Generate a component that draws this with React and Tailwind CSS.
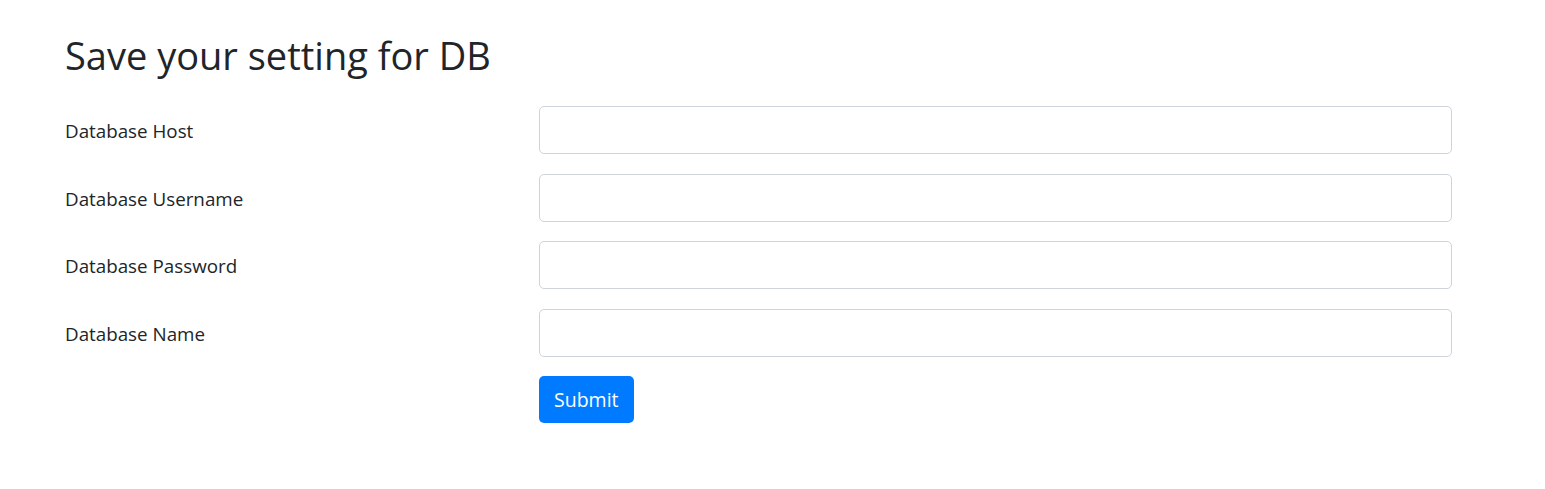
export default function App() {
    const fields = ["Database Host", "Database Username", "Database Password", "Database Name"];

    return (
        <div className="min-h-screen bg-white text-[#212529] font-['Open_Sans',sans-serif]">
            <div className="pl-[65px] pt-[31px]">
                <h1 className="text-[38px] leading-[48px] font-normal mb-[27px]">
                    Save your setting for DB
                </h1>

                <form className="flex flex-col gap-[19.5px]">
                    {fields.map((label) => (
                        <div key={label} className="flex items-center h-12">
                            <label className="w-[474px] text-[18.8px] leading-[46px] pt-[2px]">{label}</label>
                            <input
                                type="text"
                                className="w-[913px] h-12 border border-[#ced4da] rounded-[5px] px-4 text-[20px] outline-none"
                            />
                        </div>
                    ))}

                    <div className="flex">
                        <div className="w-[474px]" />
                        <button
                            type="button"
                            className="h-[47px] px-[15px] pt-[1px] bg-[#007bff] text-white text-[19.5px] leading-[30px] rounded-[5px]"
                        >
                            Submit
                        </button>
                    </div>
                </form>
            </div>
        </div>
    );
}
